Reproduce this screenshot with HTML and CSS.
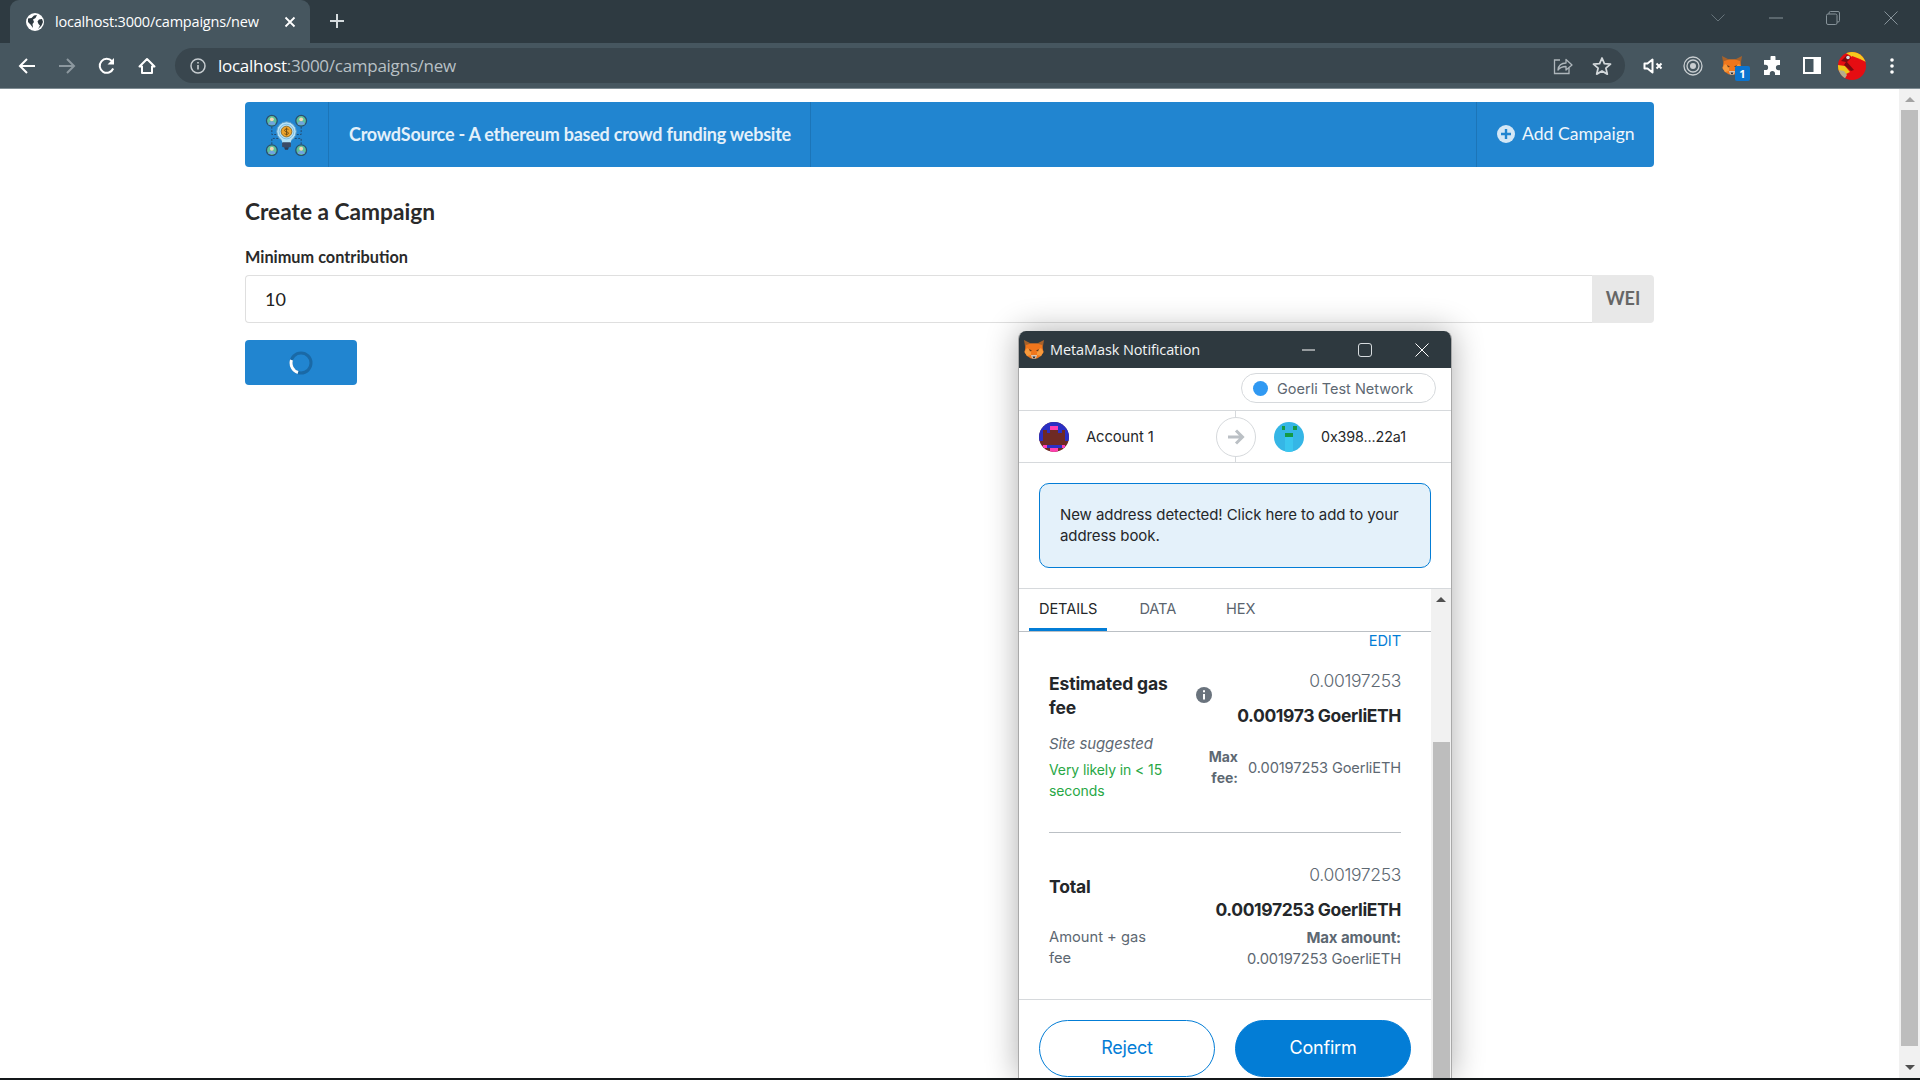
FILE: index.html
```html
<!DOCTYPE html>
<html lang="en">
<head>
<meta charset="utf-8">
<title>localhost:3000/campaigns/new</title>
<link rel="stylesheet" href="styles.css">
</head>
<body>
<svg class="defs" aria-hidden="true"><defs>
  <symbol id="fox" viewBox="0 0 20 19">
    <path d="M0 0l7 3.500h6L20 0l-1 6-1 3H2L1 6z" fill="#a8622a"/>
    <path d="M2 5l5-1.500h6L18 5l1.500 7-2.500 4-4 2.500H7L3 16 .5 12z" fill="#f0761c"/>
    <path d="M.5 12L3 8l4 2.500L7 15l-4 1zM19.500 12L17 8l-4 2.500V15l4 1z" fill="#f89a3c"/>
    <path d="M5 9l3 1.500L6 11.500zM15 9l-3 1.500 2 1z" fill="#6a3a1a"/>
    <path d="M7 15h6l-1 3.500H8z" fill="#d8c6b8"/>
    <path d="M8.500 16.500h3l-.8 1.500H9.300z" fill="#2a2a2a"/>
  </symbol>
</defs></svg>
<div class="app">
  <div class="tabstrip">
    <div class="tab">
      <svg class="favicon" viewBox="0 0 18 18"><circle cx="9" cy="9" r="9" fill="#fff"/><path d="M2 5.500l3.500-.5L8 2.500 11 2 9.500 5 7 6.500l1 2.500-1.500 2L7 15 4.500 11.500 2 9z M16 6l-3 .5-1.500 2 1 2.500 1.500 1.500L12 16l3.500-3.500L17 9z" fill="#2e3a41"/></svg>
      <span class="tab-title">localhost:3000/campaigns/new</span>
      <svg class="tab-close" viewBox="0 0 12 12"><path d="M1.500 1.500l9 9M10.500 1.500l-9 9" stroke="#fff" stroke-width="1.800"/></svg>
    </div>
    <svg class="new-tab" viewBox="0 0 16 16"><path d="M8 1v14M1 8h14" stroke="#d5dbde" stroke-width="2"/></svg>
    <div class="win-controls">
      <svg class="win-chevron" viewBox="0 0 14 8"><path d="M.5.5L7 7l6.500-6.500" fill="none" stroke="#66737a"/></svg>
      <svg class="win-min" viewBox="0 0 14 2"><path d="M0 1h14" stroke="#87939a"/></svg>
      <svg class="win-restore" viewBox="0 0 14 14"><path d="M3 3V2a1.500 1.500 0 0 1 1.500-1.500H12A1.500 1.500 0 0 1 13.500 2v7.500A1.500 1.500 0 0 1 12 11h-1" fill="none" stroke="#87939a"/><rect x=".5" y="3" width="10.500" height="10.500" rx="1.500" fill="none" stroke="#87939a"/></svg>
      <svg class="win-close" viewBox="0 0 14 14"><path d="M.5.5l13 13M13.500.5l-13 13" stroke="#87939a"/></svg>
    </div>
  </div>

  <div class="toolbar">
    <svg class="tb-icon tb-back" viewBox="0 0 18 18"><path d="M17 9H2M9 2L2 9l7 7" fill="none" stroke="#fff" stroke-width="2"/></svg>
    <svg class="tb-icon tb-fwd" viewBox="0 0 18 18"><path d="M1 9h15M9 2l7 7-7 7" fill="none" stroke="#8c989f" stroke-width="2"/></svg>
    <svg class="tb-icon tb-reload" viewBox="0 0 18 18"><path d="M15.200 11.500A7 7 0 1 1 14 4.200" fill="none" stroke="#fff" stroke-width="2"/><path d="M16 1v6.500H9.500z" fill="#fff"/></svg>
    <svg class="tb-icon tb-home" viewBox="0 0 18 18"><path d="M1.500 9.500L9 2l7.500 7.500H14V16H4V9.500z" fill="none" stroke="#fff" stroke-width="2" stroke-linejoin="round"/></svg>
    <div class="omnibox">
      <svg class="omni-info" viewBox="0 0 16 16"><circle cx="8" cy="8" r="7" fill="none" stroke="#c6ccd0" stroke-width="1.500"/><path d="M8 7v4.500M8 4v1.600" stroke="#c6ccd0" stroke-width="1.600"/></svg>
      <span class="url"><span class="url-host">localhost</span>:3000/campaigns/new</span>
      <svg class="omni-share" viewBox="0 0 20 18"><path d="M7 3H1.500v13.500H16V11" fill="none" stroke="#aeb6bb" stroke-width="1.300"/><path d="M5 13c.5-4.500 3.500-7 8-7V2.500l6 5.500-6 5v-3.500C9.500 9.500 7 10.500 5 13z" fill="none" stroke="#aeb6bb" stroke-width="1.300" stroke-linejoin="round"/></svg>
      <svg class="omni-star" viewBox="0 0 20 20"><path d="M10 2l2.400 5.600 6.100.5-4.600 4 1.400 6L10 15l-5.300 3.100 1.400-6-4.600-4 6.100-.5z" fill="none" stroke="#d3d8db" stroke-width="1.800" stroke-linejoin="round"/></svg>
    </div>
    <div class="ext-row">
      <svg class="ext ext-mute" viewBox="0 0 20 16"><path d="M1.500 5.500h3L9.500 1.500v13l-5-4h-3z" fill="none" stroke="#fff" stroke-width="2" stroke-linejoin="round"/><path d="M13.500 5.500l5 5M18.500 5.500l-5 5" stroke="#fff" stroke-width="2"/></svg>
      <svg class="ext ext-target" viewBox="0 0 20 20"><circle cx="10" cy="10" r="9" fill="none" stroke="#c9ced1" stroke-width="1.300"/><circle cx="10" cy="10" r="6" fill="none" stroke="#c9ced1" stroke-width="1.300"/><circle cx="10" cy="10" r="3" fill="#c9ced1"/></svg>
      <div class="ext ext-fox">
        <svg class="fox-svg"><use href="#fox"/></svg>
        <span class="fox-badge">1</span>
      </div>
      <svg class="ext ext-puzzle" viewBox="0 0 20 20"><path d="M7.500 1.500a2.500 2.500 0 0 1 5 0V4H17v5h-1.500a2.600 2.600 0 0 0 0 5.200H17V19H12v-1.500a2.600 2.600 0 0 0-5.200 0V19H1v-5h1.500a2.600 2.600 0 0 0 0-5.200H1V4h6.500z" fill="#fff"/></svg>
      <svg class="ext ext-side" viewBox="0 0 18 17"><rect width="18" height="17" fill="#fff"/><rect x="2" y="2" width="8.500" height="13" fill="#45565f"/></svg>
      <svg class="ext ext-avatar" viewBox="0 0 28 28"><defs><clipPath id="avc"><circle cx="14" cy="14" r="14"/></clipPath></defs><g clip-path="url(#avc)"><rect width="28" height="28" fill="#e60d12"/><path d="M6 0h22v10l-6-3-5 2-4-5z" fill="#f6c81e"/><path d="M14 4l8 3-3 3-5-2z" fill="#e60d12"/><path d="M0 13l7 1 5 6-4 2-8-3z" fill="#f0c81a"/><path d="M1 18l5 1 3 4-3 5H1z" fill="#b5ae8c"/><path d="M3 9l6-6 4 3-4 4 7 8-3 1-7-6 2-3z" fill="#7c0a10"/><circle cx="10" cy="5.500" r="1.800" fill="#d7dde0"/></g></svg>
      <svg class="ext ext-dots" viewBox="0 0 4 16"><circle cx="2" cy="2" r="1.800" fill="#fff"/><circle cx="2" cy="8" r="1.800" fill="#fff"/><circle cx="2" cy="14" r="1.800" fill="#fff"/></svg>
    </div>
  </div>

  <div class="viewport">
    <main class="page">
      <nav class="menu">
        <div class="menu-logo">
          <svg class="logo" viewBox="0 0 44 44">
            <g fill="none" stroke="#24496b" stroke-width="1" stroke-dasharray="2 1.500"><path d="M7 14v8h8M37 14v8h-8M7 32v-6h8M37 32v-6h-8"/></g>
            <g stroke="#2b4f6e" stroke-width="1.300">
              <circle cx="7" cy="8" r="5.500" fill="#5cc09a"/><circle cx="37" cy="8" r="5.500" fill="#5cc09a"/><circle cx="7" cy="38" r="5.500" fill="#5cc09a"/><circle cx="37" cy="38" r="5.500" fill="#5cc09a"/>
            </g>
            <g fill="#6fa4e0"><path d="M3.500 12a3.500 3.500 0 0 1 7 0z"/><path d="M33.500 12a3.500 3.500 0 0 1 7 0z"/><path d="M3.500 42a3.500 3.500 0 0 1 7 0z"/><path d="M33.500 42a3.500 3.500 0 0 1 7 0z"/></g>
            <g fill="#f4d7b5"><circle cx="7" cy="6.500" r="2"/><circle cx="37" cy="6.500" r="2"/><circle cx="7" cy="36.500" r="2"/><circle cx="37" cy="36.500" r="2"/></g>
            <circle cx="22" cy="19" r="10" fill="#b5e2f7" stroke="#5e9cc4" stroke-width="1"/>
            <path d="M16.500 26h11l-1.500 5h-8z" fill="#b5e2f7"/>
            <rect x="17.500" y="30" width="9" height="5" rx="1" fill="#3b4a66"/>
            <path d="M19.500 35h5l-1 2.500h-3z" fill="#2d3a52"/>
            <circle cx="22" cy="19" r="7.500" fill="none" stroke="#6fb4de" stroke-width=".8"/>
            <circle cx="22" cy="19" r="5.500" fill="#eda32b" stroke="#7a5a18" stroke-width=".8"/>
            <path d="M24 17c-1-1-4-1-4 .8s4 1 4 2.800-3 1.600-4 .6M22 15v8" fill="none" stroke="#6b4a10" stroke-width=".9"/>
          </svg>
        </div>
        <div class="menu-title">CrowdSource - A ethereum based crowd funding website</div>
        <div class="menu-spacer"></div>
        <div class="menu-add">
          <svg class="plus-icon" viewBox="0 0 18 18"><circle cx="9" cy="9" r="9" fill="#d3e7f6"/><path d="M9 4v10M4 9h10" stroke="#2185d0" stroke-width="2.400"/></svg>
          <span>Add Campaign</span>
        </div>
      </nav>
      <h3 class="heading">Create a Campaign</h3>
      <label class="field-label">Minimum contribution</label>
      <div class="input-group">
        <div class="input-box">10</div>
        <div class="input-unit">WEI</div>
      </div>
      <button class="submit">
        <svg class="spinner" viewBox="0 0 24 24"><circle cx="12" cy="12" r="10" fill="none" stroke="#1a69a6" stroke-width="3"/><path d="M2.500 9a10 10 0 0 0 6.500 12.500" fill="none" stroke="#fff" stroke-width="3"/></svg>
      </button>
    </main>
    <aside class="scrollbar">
      <div class="sb-btn"><span class="arrow-up"></span></div>
      <div class="sb-thumb"></div>
      <div class="sb-rest"></div>
      <div class="sb-btn"><span class="arrow-down"></span></div>
    </aside>

    <section class="popup">
      <header class="pop-title">
        <svg class="pop-fox"><use href="#fox"/></svg>
        <span class="pop-title-text">MetaMask Notification</span>
        <svg class="pop-min" viewBox="0 0 14 2"><path d="M0 1h13" stroke="#fff"/></svg>
        <svg class="pop-max" viewBox="0 0 14 14"><rect x=".5" y=".5" width="13" height="13" rx="2.500" fill="none" stroke="#d7dcdf" stroke-width="1"/></svg>
        <svg class="pop-close" viewBox="0 0 14 14"><path d="M.5.5l13 13M13.500.5l-13 13" stroke="#fff"/></svg>
      </header>
      <div class="net-row">
        <div class="net-pill"><span class="net-dot"></span>Goerli Test Network</div>
      </div>
      <div class="acct-row">
        <div class="acct acct-from">
          <svg class="blockie" viewBox="0 0 8 8" shape-rendering="crispEdges"><defs><clipPath id="bc"><circle cx="4" cy="4" r="4"/></clipPath></defs><g clip-path="url(#bc)"><rect width="8" height="8" fill="#6e2a24"/><rect width="8" height="2" fill="#2a2fc4"/><rect x="3" y="1" width="2" height="1" fill="#ff3fb0"/><rect y="2" width="1" height="3" fill="#2a2fc4"/><rect x="7" y="2" width="1" height="3" fill="#2a2fc4"/><rect x="2" y="2" width="1" height="1" fill="#2a2fc4"/><rect x="5" y="2" width="1" height="1" fill="#2a2fc4"/><rect x="1" y="6" width="6" height="1" fill="#2a2fc4"/><rect x="1" y="6" width="1" height="1" fill="#ff3fb0"/><rect x="6" y="6" width="1" height="1" fill="#ff3fb0"/><rect x="3" y="7" width="2" height="1" fill="#ff3fb0"/></g></svg>
          <span class="acct-name">Account 1</span>
        </div>
        <div class="acct acct-to">
          <svg class="blockie" viewBox="0 0 8 8" shape-rendering="crispEdges"><defs><clipPath id="bd"><circle cx="4" cy="4" r="4"/></clipPath></defs><g clip-path="url(#bd)"><rect width="8" height="8" fill="#35b6e6"/><rect x="3" y="4" width="2" height="4" fill="#3ac6ef"/><rect x="2" y="1" width="1" height="1" fill="#149a45"/><rect x="5" y="1" width="1" height="1" fill="#149a45"/><rect x="3" y="3" width="2" height="1" fill="#149a45"/></g></svg>
          <span class="acct-name">0x398...22a1</span>
        </div>
        <div class="acct-line"></div>
        <div class="acct-arrow"><svg viewBox="0 0 20 18"><path d="M2 9h14M10 2.500L16.500 9 10 15.500" fill="none" stroke="#bbc0c5" stroke-width="3"/></svg></div>
      </div>
      <div class="alert-wrap">
        <div class="alert">New address detected! Click here to add to your address book.</div>
      </div>
      <div class="pop-scrollarea">
        <div class="pop-main">
          <div class="tabs">
            <span class="tab-item tab-active">DETAILS</span>
            <span class="tab-item tab-data">DATA</span>
            <span class="tab-item tab-hex">HEX</span>
          </div>
          <div class="edit-row"><span class="edit">EDIT</span></div>
          <div class="fee">
            <div class="fee-top">
              <div class="fee-name">Estimated gas fee</div>
              <svg class="fee-info" viewBox="0 0 16 16"><circle cx="8" cy="8" r="8" fill="#6a737d"/><path d="M8 7v5.500M8 3.200v2" stroke="#fff" stroke-width="2"/></svg>
              <div class="fee-values">
                <div class="val-light">0.00197253</div>
                <div class="val-bold">0.001973 GoerliETH</div>
              </div>
            </div>
            <div class="fee-sub">
              <div class="sub-left">
                <div class="site-sug">Site suggested</div>
                <div class="likely">Very likely in &lt; 15 seconds</div>
              </div>
              <div class="max-lbl">Max fee:</div>
              <div class="max-val">0.00197253 GoerliETH</div>
            </div>
          </div>
          <div class="rule"></div>
          <div class="total">
            <div class="total-top">
              <div class="fee-name">Total</div>
              <div class="fee-values">
                <div class="val-light">0.00197253</div>
                <div class="val-bold">0.00197253 GoerliETH</div>
              </div>
            </div>
            <div class="total-sub">
              <div class="amt-note">Amount + gas fee</div>
              <div class="amt-max"><b>Max amount:</b><br>0.00197253 GoerliETH</div>
            </div>
          </div>
          <div class="actions">
            <div class="btn btn-reject">Reject</div>
            <div class="btn btn-confirm">Confirm</div>
          </div>
        </div>
        <div class="pop-sb">
          <div class="pop-sb-btn"><span class="arrow-up dark"></span></div>
          <div class="pop-sb-space"></div>
          <div class="pop-sb-thumb"></div>
        </div>
      </div>
    </section>
  </div>
  <div class="edge"></div>
</div>
</body>
</html>
```

FILE: styles.css
```css
* { box-sizing: border-box; }
html, body { margin: 0; padding: 0; height: 100%; overflow: hidden; }
body { font-family: "Lato", sans-serif; background: #fff; color: #212121; }
.defs { display: none; }
.app { width: 1920px; height: 1080px; display: flex; flex-direction: column; overflow: hidden; }

/* browser chrome */
.tabstrip { height: 43px; background: #2e3a41; display: flex; align-items: flex-start; padding-left: 10px; flex: none; }
.tab { width: 300px; height: 43px; background: #46565f; border-radius: 9px 9px 0 0; display: flex; align-items: center; padding-left: 16px; color: #fff; }
.favicon { width: 18px; height: 18px; flex: none; }
.tab-title { font: 14.500px "Open Sans", sans-serif; margin-left: 11px; width: 230px; letter-spacing: -.2px; white-space: nowrap; }
.tab-close { width: 12px; height: 12px; margin-left: -1px; }
.new-tab { width: 16px; height: 16px; margin: 13px 0 0 19px; }
.win-controls { margin-left: auto; display: flex; align-items: center; height: 36px; }
.win-chevron { width: 14px; height: 8px; margin-right: 44px; }
.win-min { width: 14px; height: 2px; margin-right: 43px; }
.win-restore { width: 14px; height: 14px; margin-right: 44px; }
.win-close { width: 14px; height: 14px; margin-right: 22px; }

.toolbar { height: 46px; flex: none; background: #46565f; border-bottom: 1px solid #7f8c93; display: flex; align-items: center; padding-left: 18px; }
.tb-icon { width: 18px; height: 18px; flex: none; margin-right: 22px; }
.omnibox { width: 1450px; height: 35px; margin-left: -3px; border-radius: 18px; background: #39464e; display: flex; align-items: center; padding-left: 15px; flex: none; }
.omni-info { width: 16px; height: 16px; flex: none; }
.url { font: 17px "Open Sans", sans-serif; color: #b8c0c5; margin-left: 12px; letter-spacing: -.27px; white-space: nowrap; }
.url-host { color: #fff; }
.omni-share { width: 20px; height: 18px; margin-left: auto; margin-right: 19px; flex: none; }
.omni-star { width: 20px; height: 20px; margin-right: 13px; flex: none; }
.ext-row { display: flex; align-items: center; flex: none; height: 44px; margin-left: 18px; }
.ext { flex: none; }
.ext-mute { width: 20px; height: 16px; margin-right: 20px; }
.ext-target { width: 20px; height: 20px; margin-right: 19px; }
.ext-fox { width: 20px; height: 19px; margin-right: 21px; position: relative; }
.fox-svg { width: 20px; height: 19px; display: block; }
.fox-badge { position: absolute; left: 13px; top: 10px; width: 15px; height: 15px; background: #0b74cf; border-radius: 2px; color: #fff; font: 700 11px/15px "Open Sans", sans-serif; text-align: center; }
.ext-puzzle { width: 20px; height: 20px; margin-right: 20px; }
.ext-side { width: 18px; height: 17px; margin-right: 17px; }
.ext-avatar { width: 28px; height: 28px; margin-right: 24px; }
.ext-dots { width: 4px; height: 16px; }

/* page */
.viewport { flex: 1; min-height: 0; display: flex; position: relative; overflow: hidden; }
.page { flex: 1; padding: 13px 245px 0; }
.menu { height: 65px; background: #2185d0; border-radius: 4px; display: flex; align-items: stretch; color: #fff; }
.menu-logo { width: 84px; border-right: 1px solid #1c75b8; display: flex; align-items: center; justify-content: center; }
.logo { width: 43px; height: 43px; }
.menu-title { width: 482px; border-right: 1px solid #1c75b8; padding-left: 20px; font-weight: 700; font-size: 18px; line-height: 65px; color: #e3f0fa; letter-spacing: -.24px; white-space: nowrap; }
.menu-spacer { flex: 1; }
.menu-add { width: 178px; border-left: 1px solid #1c75b8; display: flex; align-items: center; padding: 0 0 2px 20px; font-size: 17.600px; gap: 7px; color: #eef6fc; }
.plus-icon { width: 18px; height: 18px; margin-top: 1px; }
.heading { margin: 32px 0 0; font-size: 22.700px; line-height: 26px; font-weight: 700; color: #2a2a2a; }
.field-label { display: block; margin-top: 23px; font-size: 16.300px; line-height: 18px; font-weight: 700; color: #2a2a2a; }
.input-group { display: flex; height: 48px; margin-top: 9px; }
.input-box { flex: 1; border: 1px solid #dfdfdf; border-right: 0; border-radius: 4px 0 0 4px; padding-left: 19px; font-size: 18px; line-height: 46px; color: #212121; }
.input-unit { width: 62px; background: #e8e8e8; border-radius: 0 4px 4px 0; font-size: 18px; font-weight: 700; line-height: 46px; text-align: center; color: #666; }
.submit { display: flex; align-items: center; justify-content: center; width: 112px; height: 45px; margin-top: 17px; padding: 0; border: 0; background: #2185d0; border-radius: 4px; }
.spinner { width: 24px; height: 24px; }

.scrollbar { width: 21px; flex: none; background: #f1f1f1; display: flex; flex-direction: column; align-items: center; }
.sb-btn { height: 21px; width: 21px; display: flex; align-items: center; justify-content: center; flex: none; }
.sb-thumb { width: 17px; height: 936px; background: #bdbdbd; flex: none; }
.sb-rest { flex: 1; }
.arrow-up { width: 0; height: 0; border: 5px solid transparent; border-top: 0; border-bottom: 5px solid #a3a3a3; }
.arrow-down { width: 0; height: 0; border: 5px solid transparent; border-bottom: 0; border-top: 5px solid #505050; }
.arrow-up.dark { border-bottom-color: #505050; }

/* popup window */
.popup { position: absolute; left: 1018px; top: 242px; width: 434px; height: 747px; background: #fff; border: 1px solid #a9a9a9; border-top: 0; border-bottom: 0; border-radius: 8px 8px 0 0; box-shadow: 0 0 32px rgba(0,0,0,.32); display: flex; flex-direction: column; font-family: "Inter", sans-serif; overflow: hidden; }
.pop-title { height: 37px; flex: none; background: #2e393f; display: flex; align-items: center; padding-left: 5px; color: #fff; }
.pop-fox { width: 20px; height: 19px; flex: none; }
.pop-title-text { font: 14.500px "Open Sans", sans-serif; margin-left: 6px; width: 222px; letter-spacing: -.1px; white-space: nowrap; color: #f2f4f5; }
.pop-min { width: 14px; height: 2px; margin-left: 30px; }
.pop-max { width: 14px; height: 14px; margin-left: 42px; }
.pop-close { width: 14px; height: 14px; margin-left: 43px; }
.net-row { height: 43px; flex: none; border-bottom: 1px solid #d6d9dc; display: flex; align-items: center; justify-content: flex-end; padding-right: 15px; padding-bottom: 2px; }
.net-pill { height: 30px; width: 195px; border: 1px solid #d6d9dc; border-radius: 15px; display: flex; align-items: center; padding-left: 11px; gap: 9px; font-size: 14.500px; color: #5d6872; white-space: nowrap; }
.net-dot { width: 15px; height: 15px; border-radius: 50%; background: #3099f2; flex: none; }
.acct-row { height: 52px; flex: none; border-bottom: 1px solid #d6d9dc; display: flex; position: relative; }
.acct { display: flex; align-items: center; }
.acct-from { width: 235px; padding-left: 20px; }
.acct-to { padding-left: 20px; }
.blockie { width: 30px; height: 30px; flex: none; }
.acct-name { margin-left: 17px; font-size: 14.800px; color: #24272a; letter-spacing: -.1px; }
.acct-to .acct-name { margin-left: 17px; font-size: 14.300px; }
.acct-line { position: absolute; left: 216px; top: 0; bottom: 0; width: 1px; background: #d6d9dc; }
.acct-arrow { position: absolute; left: 197px; top: 6px; width: 40px; height: 40px; border-radius: 50%; border: 1px solid #d6d9dc; background: #fff; display: flex; align-items: center; justify-content: center; }
.acct-arrow svg { width: 20px; height: 18px; }
.alert-wrap { height: 126px; flex: none; padding: 20px 20px 0 20px; border-bottom: 1px solid #d6d9dc; }
.alert { height: 85px; background: #e4f1fa; border: 1px solid #037dd6; border-radius: 10px; padding: 20px 20px 0; font-size: 15px; line-height: 21px; color: #24272a; letter-spacing: -.08px; }
.pop-scrollarea { flex: 1; min-height: 0; display: flex; }
.pop-main { width: 412px; flex: none; position: relative; }
.pop-sb { width: 20px; flex: none; background: #f1f1f1; display: flex; flex-direction: column; align-items: center; }
.pop-sb-btn { height: 21px; display: flex; align-items: center; justify-content: center; flex: none; }
.pop-sb-space { height: 132px; flex: none; }
.pop-sb-thumb { flex: 1; width: 17px; background: #bdbdbd; }
.tabs { height: 43px; border-bottom: 1px solid #bbc0c5; display: flex; position: relative; font-size: 14.600px; line-height: 40px; color: #5a646e; }
.tab-item { letter-spacing: -.1px; }
.tab-active { margin-left: 20px; color: #24272a; }
.tab-active::after { content: ""; position: absolute; left: 10px; top: 39px; width: 78px; height: 3px; background: #037dd6; }
.tab-data { margin-left: 42px; }
.tab-hex { margin-left: 50px; }
.edit-row { height: 16px; line-height: 16px; margin-top: 1px; text-align: right; padding-right: 30px; font-size: 14.600px; color: #037dd6; letter-spacing: -.1px; }
.fee { padding: 0 30px; }
.fee-top { display: flex; margin-top: 20px; height: 55px; position: relative; }
.fee-name { width: 130px; font-size: 17.500px; line-height: 24px; font-weight: 700; color: #24272a; letter-spacing: -.15px; padding-top: 3px; }
.fee-info { width: 16px; height: 16px; margin: 18px 0 0 17px; flex: none; }
.fee-values { margin-left: auto; text-align: right; white-space: nowrap; }
.val-light { font-size: 17.500px; line-height: 24px; color: #5d6872; font-weight: 300; letter-spacing: -.33px; height: 24px; }
.val-bold { font-size: 17.500px; line-height: 24px; font-weight: 700; color: #24272a; margin-top: 11px; letter-spacing: -.38px; }
.fee-sub { display: flex; font-size: 14px; line-height: 21px; margin-top: 9px; height: 99px; position: relative; }
.sub-left { width: 120px; color: #5d6872; }
.site-sug { font-style: italic; font-size: 15px; letter-spacing: -.1px; margin-bottom: 5px; }
.likely { color: #28a745; letter-spacing: -.1px; }
.max-lbl { width: 50px; margin: 13px 0 0 19px; text-align: right; font-weight: 700; color: #5d6872; line-height: 21px; }
.max-val { margin: 25px 0 0 auto; font-size: 14.600px; color: #5d6872; white-space: nowrap; letter-spacing: -.1px; }
.rule { height: 1px; margin: 0 30px; background: #bbc0c5; }
.total { padding: 0 30px; margin-top: 30px; }
.total-top { display: flex; height: 60px; }
.total-top .fee-name { padding-top: 12px; }
.total-sub { display: flex; justify-content: space-between; font-size: 14.700px; line-height: 21px; color: #5d6872; margin-top: 4px; }
.amt-note { width: 110px; }
.amt-max { text-align: right; letter-spacing: -.1px; }
.amt-max b { font-size: 15px; }
.actions { position: absolute; left: 0; right: 0; top: 410px; height: 78px; border-top: 1px solid #d6d9dc; display: flex; padding: 20px 0 0 20px; gap: 20px; }
.btn { width: 176px; height: 57px; border-radius: 29px; font-size: 18px; line-height: 53px; text-align: center; letter-spacing: -.2px; }
.btn-reject { border: 1px solid #037dd6; color: #037dd6; }
.btn-confirm { border: 1px solid #037dd6; background: #037dd6; color: #fff; }
.edge { height: 2px; flex: none; background: #14181a; }
```
